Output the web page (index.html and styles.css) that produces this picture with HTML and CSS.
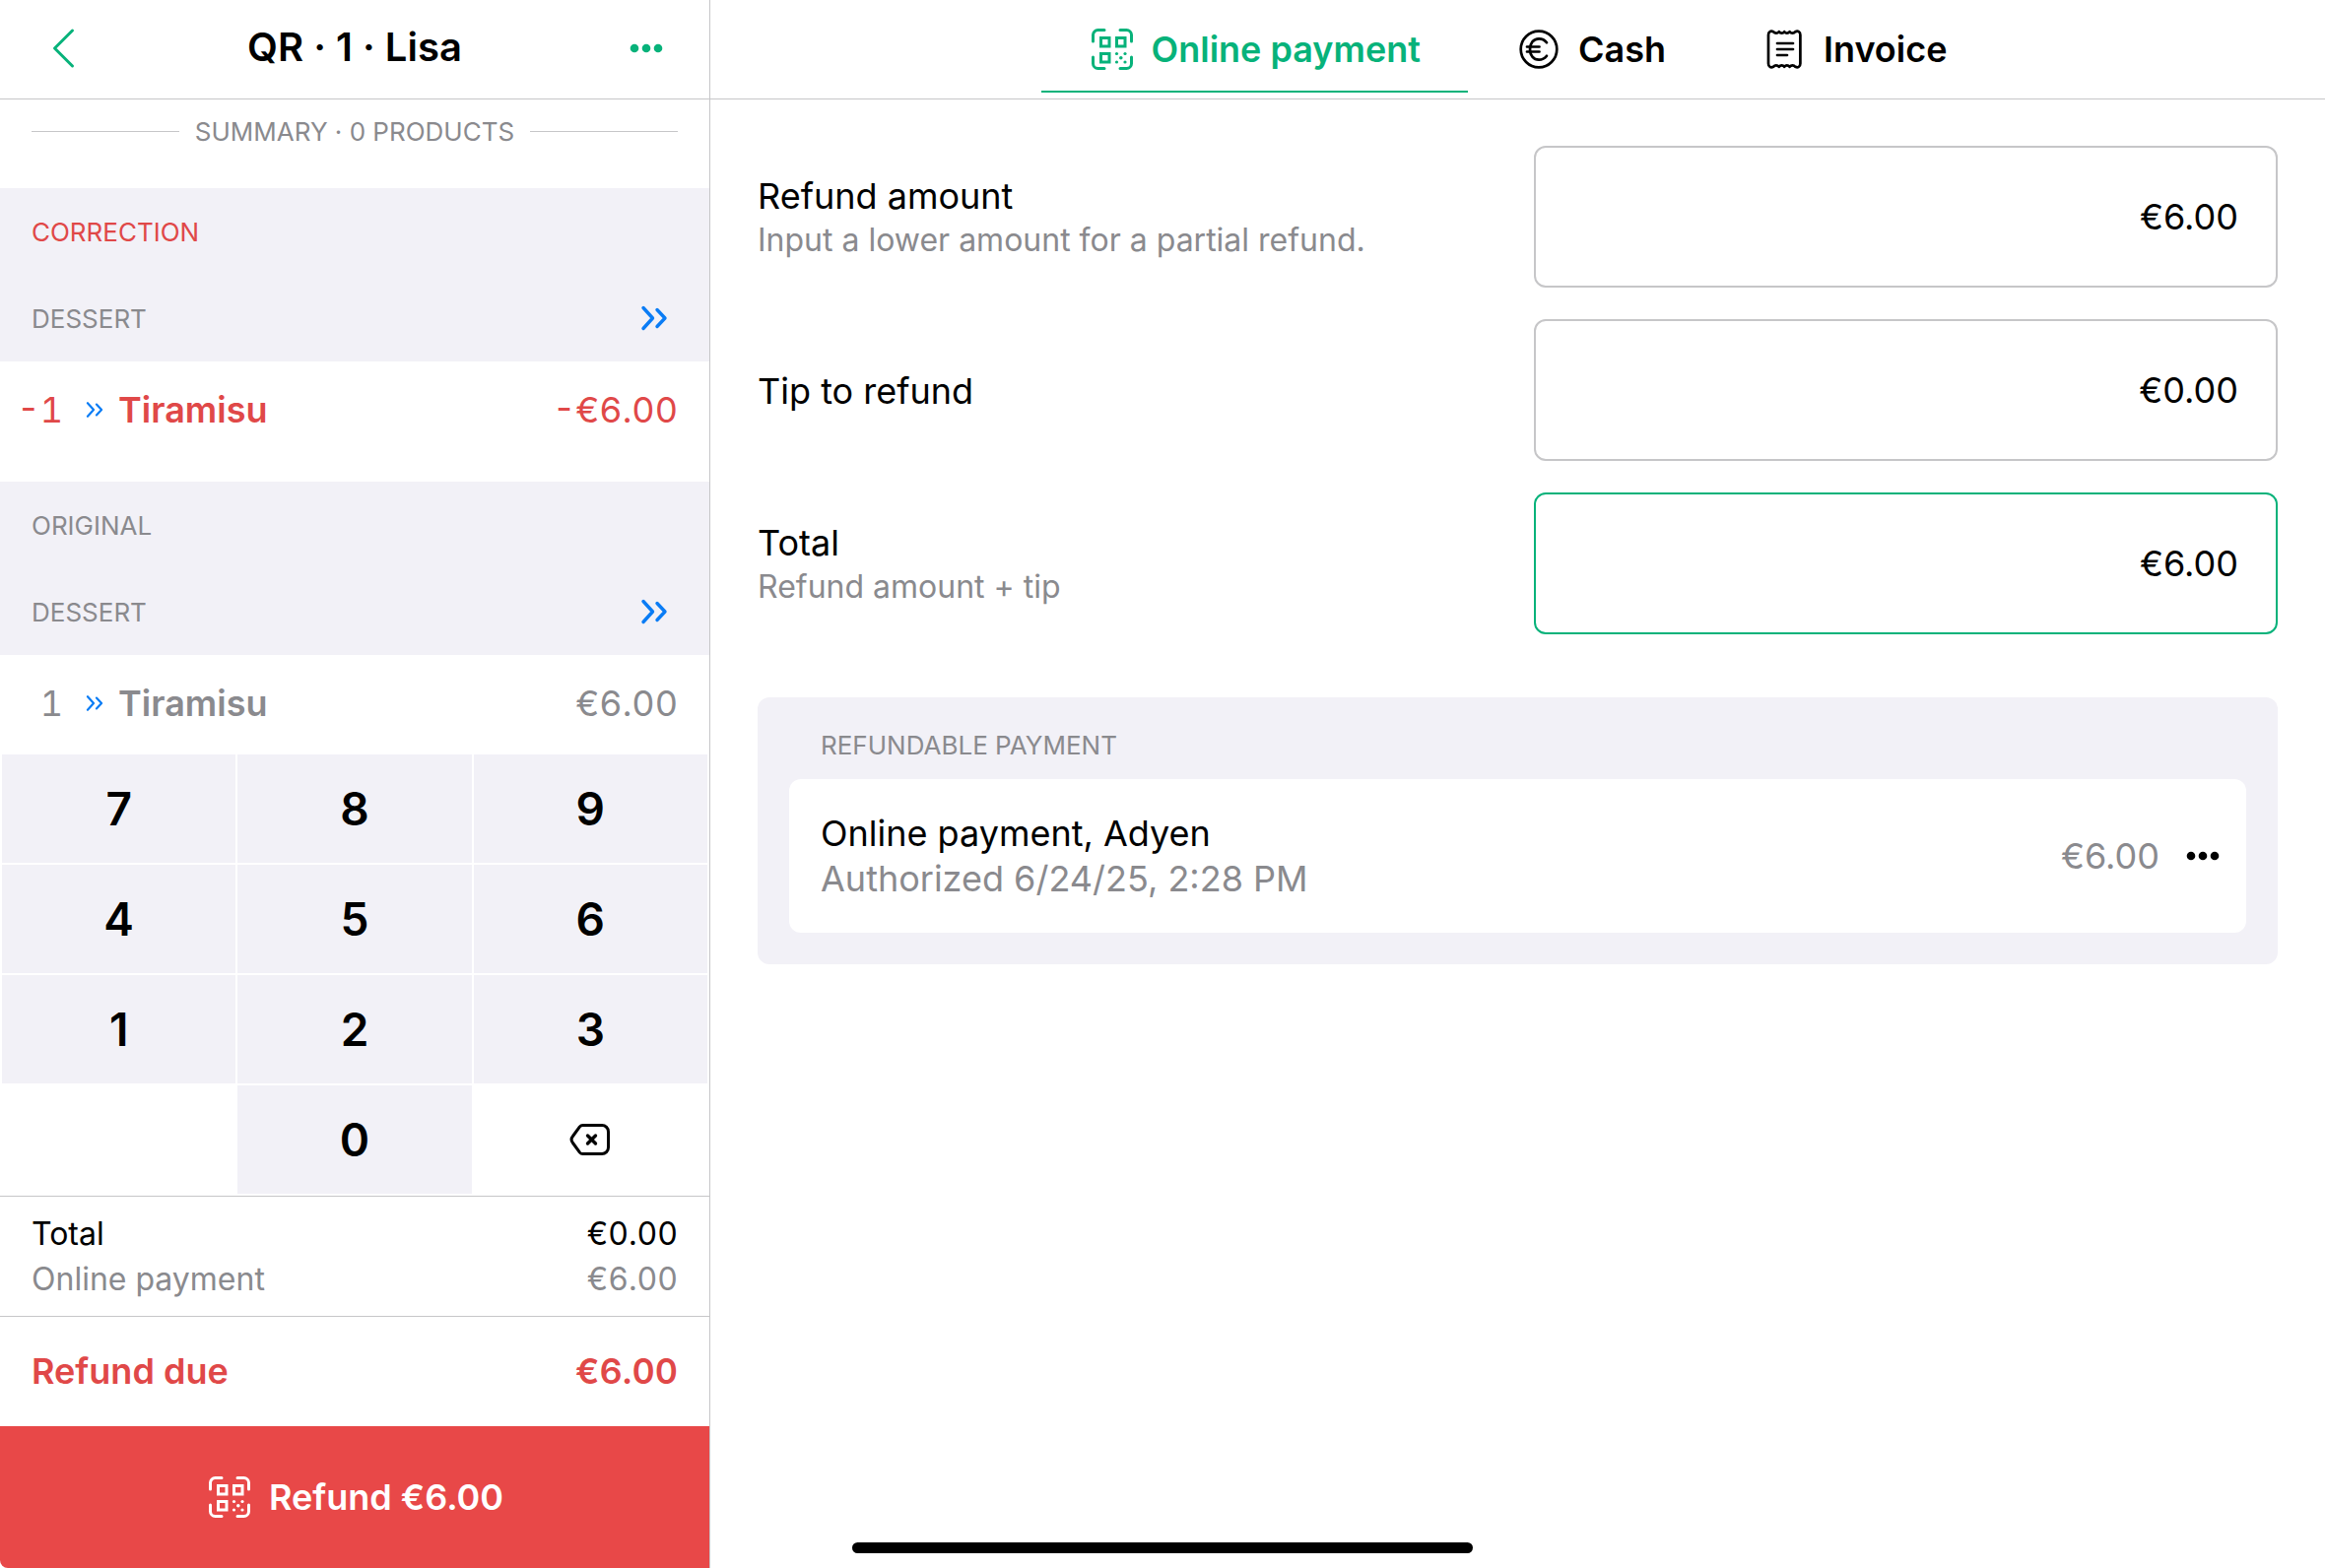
FILE: index.html
```html
<!DOCTYPE html>
<html lang="en">

<head>
    <meta charset="UTF-8">
    <meta name="viewport" content="width=device-width, initial-scale=1.0">
    <title>Refund</title>
    <link rel="stylesheet" href="styles.css">
</head>

<body>

    <!-- shared icons -->
    <svg class="sprite" aria-hidden="true">
        <symbol id="icon-qr" viewBox="0 0 48 48">
            <g fill="none" stroke="currentColor" stroke-width="3" stroke-linecap="round" stroke-linejoin="round">
                <path d="M4.500 16V9.500a5 5 0 0 1 5-5H16M32 4.500h6.500a5 5 0 0 1 5 5V16M43.500 32v6.500a5 5 0 0 1-5 5H32M16 43.500H9.500a5 5 0 0 1-5-5V32" />
                <path stroke-linejoin="miter" stroke-linecap="butt" d="M12.500 12.500h8.500v8.500h-8.500zM28.500 12.500h8.500v8.500h-8.500zM12.500 28.500h8.500v8.500h-8.500z" />
            </g>
            <g fill="currentColor">
                <circle cx="28.500" cy="28.500" r="1.600" />
                <circle cx="37" cy="28.500" r="1.600" />
                <circle cx="32.800" cy="32.800" r="1.800" />
                <circle cx="28.500" cy="37" r="1.600" />
                <circle cx="37" cy="37" r="1.600" />
            </g>
        </symbol>
        <symbol id="icon-course" viewBox="0 0 28 26">
            <path fill="none" stroke="currentColor" stroke-width="3.400" stroke-linecap="round" stroke-linejoin="round" d="M3 2.500 12.500 13 3 23.500M17 4.500 25 13 17 21.500" />
        </symbol>
        <symbol id="icon-more" viewBox="0 0 34 10">
            <g fill="currentColor">
                <circle cx="5" cy="5" r="4.300" />
                <circle cx="17" cy="5" r="4.300" />
                <circle cx="29" cy="5" r="4.300" />
            </g>
        </symbol>
    </svg>

    <div class="app">
        <aside class="order">
            <header class="order-header">
                <button class="icon-button" aria-label="Back">
                    <svg class="icon-back" viewBox="0 0 24 42" fill="none" stroke="currentColor" stroke-width="3" stroke-linecap="round" stroke-linejoin="round">
                        <path d="M21.500 3 3.500 21l18 18" />
                    </svg>
                </button>
                <h1>QR · 1 · Lisa</h1>
                <button class="icon-button" aria-label="More">
                    <svg class="icon-more"><use href="#icon-more" /></svg>
                </button>
            </header>

            <div class="order-list">
                <p class="summary">SUMMARY · 0 PRODUCTS</p>

                <section class="correction">
                    <h2 class="row-title">CORRECTION</h2>
                    <h3 class="row-title">DESSERT <svg class="icon-course"><use href="#icon-course" /></svg></h3>
                    <div class="item">
                        <span class="qty">-1</span>
                        <svg class="icon-course small"><use href="#icon-course" /></svg>
                        <span class="name">Tiramisu</span>
                        <span class="price">-€6.00</span>
                    </div>
                </section>

                <section class="original">
                    <h2 class="row-title">ORIGINAL</h2>
                    <h3 class="row-title">DESSERT <svg class="icon-course"><use href="#icon-course" /></svg></h3>
                    <div class="item">
                        <span class="qty">1</span>
                        <svg class="icon-course small"><use href="#icon-course" /></svg>
                        <span class="name">Tiramisu</span>
                        <span class="price">€6.00</span>
                    </div>
                </section>
            </div>

            <div class="keypad">
                <button>7</button>
                <button>8</button>
                <button>9</button>
                <button>4</button>
                <button>5</button>
                <button>6</button>
                <button>1</button>
                <button>2</button>
                <button>3</button>
                <button class="zero">0</button>
                <button class="delete" aria-label="Delete">
                    <svg class="icon-delete" viewBox="0 0 44 36" fill="none" stroke="currentColor" stroke-width="3" stroke-linecap="round" stroke-linejoin="round">
                        <path d="M14.500 3.500H34a6.500 6.500 0 0 1 6.500 6.500v16a6.500 6.500 0 0 1-6.500 6.500H14.500a4 4 0 0 1-3-1.400L4.500 21.500a5.500 5.500 0 0 1 0-7L11.500 4.900a4 4 0 0 1 3-1.400z" />
                        <path stroke-width="3.400" d="m19.500 14 8 8m0-8-8 8" />
                    </svg>
                </button>
            </div>

            <div class="totals">
                <p>Total <span>€0.00</span></p>
                <p class="muted">Online payment <span>€6.00</span></p>
            </div>
            <p class="due">Refund due <span>€6.00</span></p>
            <button class="refund-button">
                <svg class="icon"><use href="#icon-qr" /></svg>
                Refund €6.00
            </button>
        </aside>

        <main class="payment">
            <nav class="tabs">
                <a class="active" href="#online">
                    <svg class="icon"><use href="#icon-qr" /></svg>
                    Online payment
                </a>
                <a href="#cash">
                    <svg class="icon" viewBox="0 0 48 48" fill="none" stroke="currentColor" stroke-width="2.700" stroke-linecap="round">
                        <circle cx="24" cy="24" r="18.300" />
                        <path d="M32 17.200A10 10 0 0 0 24 13.300c-5.500 0-9 4.700-9 10.700s3.500 10.700 9 10.700a10 10 0 0 0 8-3.900M12 21.500h12.500M12 26.500h12.500" />
                    </svg>
                    Cash
                </a>
                <a href="#invoice">
                    <svg class="icon" viewBox="0 0 48 48" fill="none" stroke="currentColor" stroke-width="2.700" stroke-linecap="round" stroke-linejoin="round">
                        <path d="M8 9.500c0-3.500 2.600-4.600 5-3.300 1.700 2 4.200 2 5.700 0 1.700 2 4 2 5.500 0 1.500 2 3.800 2 5.500 0 1.500 2 4 2 5.700 0 2.400-1.300 5-.2 5 3.300v29c0 3.500-2.600 4.600-5 3.300-1.700-2-4.200-2-5.700 0-1.700-2-4-2-5.500 0-1.500-2-3.800-2-5.500 0-1.500-2-4-2-5.700 0-2.400 1.300-5 .2-5-3.300z" />
                        <path d="M17 18h16M17 24h16M17 30h10" />
                    </svg>
                    Invoice
                </a>
            </nav>

            <form class="refund-form">
                <div class="field">
                    <label for="amount">Refund amount <small>Input a lower amount for a partial refund.</small></label>
                    <input type="text" id="amount" value="€6.00">
                </div>
                <div class="field">
                    <label for="tip">Tip to refund</label>
                    <input type="text" id="tip" value="€0.00">
                </div>
                <div class="field">
                    <label for="total">Total <small>Refund amount + tip</small></label>
                    <input type="text" id="total" class="selected" value="€6.00">
                </div>
            </form>

            <section class="refundable">
                <h2>REFUNDABLE PAYMENT</h2>
                <div class="payment-card">
                    <div class="details">
                        <p>Online payment, Adyen</p>
                        <p class="muted">Authorized 6/24/25, 2:28 PM</p>
                    </div>
                    <span class="muted">€6.00</span>
                    <button class="icon-button" aria-label="Payment options">
                        <svg class="icon-more"><use href="#icon-more" /></svg>
                    </button>
                </div>
            </section>
        </main>
    </div>

    <div class="home-indicator"></div>

</body>

</html>
```
FILE: styles.css
```css
* {
    box-sizing: border-box;
}

body {
    margin: 0;
    background: white;
    color: black;
    font-family: Inter, 'Liberation Sans', sans-serif;
    font-size: 36px;
}

h1,
h2,
h3,
p {
    margin: 0;
}

button {
    padding: 0;
    border: none;
    background: none;
    color: inherit;
    font: inherit;
    cursor: pointer;
}

svg {
    display: block;
    flex: none;
}

.sprite {
    position: absolute;
    width: 0;
    height: 0;
}

.icon {
    width: 48px;
    height: 48px;
}

.icon-back {
    width: 24px;
    height: 42px;
}

.icon-more {
    width: 34px;
    height: 10px;
}

.icon-delete {
    width: 44px;
    height: 36px;
}

.icon-course {
    width: 28px;
    height: 26px;
    color: #0a7cf5;
}

.icon-course.small {
    width: 18px;
    height: 18px;
}

.muted {
    color: #8a8a8e;
}

.app {
    display: flex;
    height: 100vh;
}

/* left column */
.order {
    display: flex;
    flex-direction: column;
    width: 721px;
    border-right: 1px solid #c6c6c8;
}

.order-header {
    display: grid;
    grid-template-columns: 96px 1fr 96px;
    align-items: center;
    height: 101px;
    padding: 0 16px 2px;
    border-bottom: 1px solid #c6c6c8;
    color: #07b27a;
}

.order-header h1 {
    padding-bottom: 4px;
    color: black;
    font-size: 40px;
    font-weight: 600;
    text-align: center;
}

.icon-button {
    display: flex;
    align-items: center;
    justify-content: center;
}

.order-list {
    flex: 1;
    min-height: 0;
    overflow: hidden;
}

.summary {
    display: flex;
    align-items: center;
    gap: 16px;
    height: 90px;
    padding: 0 32px 26px;
    color: #8a8a8e;
    font-size: 26px;
}

.summary::before,
.summary::after {
    content: '';
    flex: 1;
    height: 1px;
    background: #c6c6c8;
}

.row-title {
    display: flex;
    align-items: center;
    justify-content: space-between;
    height: 88px;
    padding: 0 42px 0 32px;
    background: #f2f1f7;
    color: #8a8a8e;
    font-size: 26px;
    font-weight: 400;
}

.item {
    display: flex;
    align-items: center;
    padding: 24px 32px 48px 0;
    color: #8a8a8e;
    line-height: 50px;
}

.correction h2,
.correction .item {
    color: #e04848;
}

.qty {
    width: 64px;
    margin-right: 23px;
    text-align: right;
}

.name {
    flex: 1;
    margin-left: 15px;
    font-weight: 600;
}

.qty,
.price,
.totals span,
.due span {
    font-variant-numeric: tabular-nums;
}

.keypad {
    display: grid;
    grid-template-columns: repeat(3, 1fr);
    grid-auto-rows: 110px;
    gap: 2px;
    padding: 0 2px 2px;
}

.keypad button {
    display: flex;
    align-items: center;
    justify-content: center;
    background: #f2f1f7;
    font-size: 46px;
    font-weight: 600;
}

.keypad .zero {
    grid-column: 2;
}

.keypad .delete {
    background: white;
}

.totals {
    padding: 15px 32px 14px;
    border-top: 1px solid #c6c6c8;
    font-size: 32px;
    line-height: 46px;
}

.totals p,
.due {
    display: flex;
    justify-content: space-between;
}

.due {
    padding: 0 32px;
    border-top: 1px solid #c6c6c8;
    color: #e04848;
    font-weight: 600;
    line-height: 111px;
}

.refund-button {
    display: flex;
    align-items: center;
    justify-content: center;
    gap: 16px;
    height: 144px;
    border-bottom-left-radius: 8px;
    background: #e84848;
    color: white;
    font-weight: 600;
}

/* right column */
.payment {
    flex: 1;
}

.tabs {
    display: flex;
    justify-content: center;
    height: 101px;
    padding-bottom: 6px;
    border-bottom: 1px solid #c6c6c8;
}

.tabs a {
    display: flex;
    align-items: center;
    gap: 16px;
    padding: 8px 48px 0;
    border-bottom: 2px solid transparent;
    color: black;
    font-weight: 600;
    text-decoration: none;
}

.tabs .active {
    border-color: #07b27a;
    color: #07b27a;
}

.refund-form {
    display: grid;
    gap: 32px;
    padding: 47px 48px 64px;
}

.field {
    display: grid;
    grid-template-columns: 1fr 1fr;
    align-items: center;
    gap: 32px;
}

.field label {
    padding-top: 2px;
    line-height: 46px;
}

.field small {
    display: block;
    color: #8a8a8e;
    font-size: 32px;
    line-height: 44px;
}

.field input {
    width: 100%;
    height: 144px;
    padding: 0 38px;
    border: 2px solid #c6c6c8;
    border-radius: 12px;
    background: white;
    color: black;
    font: inherit;
    text-align: right;
}

.field .selected {
    border-color: #07b27a;
}

.refundable {
    margin: 0 48px;
    padding: 32px;
    border-radius: 12px;
    background: #f2f1f7;
}

.refundable h2 {
    margin-bottom: 17px;
    padding: 0 32px;
    color: #8a8a8e;
    font-size: 26px;
    font-weight: 400;
    line-height: 34px;
}

.payment-card {
    display: flex;
    align-items: center;
    gap: 27px;
    padding: 32px 27px 32px 32px;
    border-radius: 12px;
    background: white;
    line-height: 46px;
}

.details {
    flex: 1;
}

.home-indicator {
    position: fixed;
    bottom: 15px;
    left: 50%;
    width: 630px;
    height: 11px;
    margin-left: -315px;
    border-radius: 6px;
    background: black;
}
```
